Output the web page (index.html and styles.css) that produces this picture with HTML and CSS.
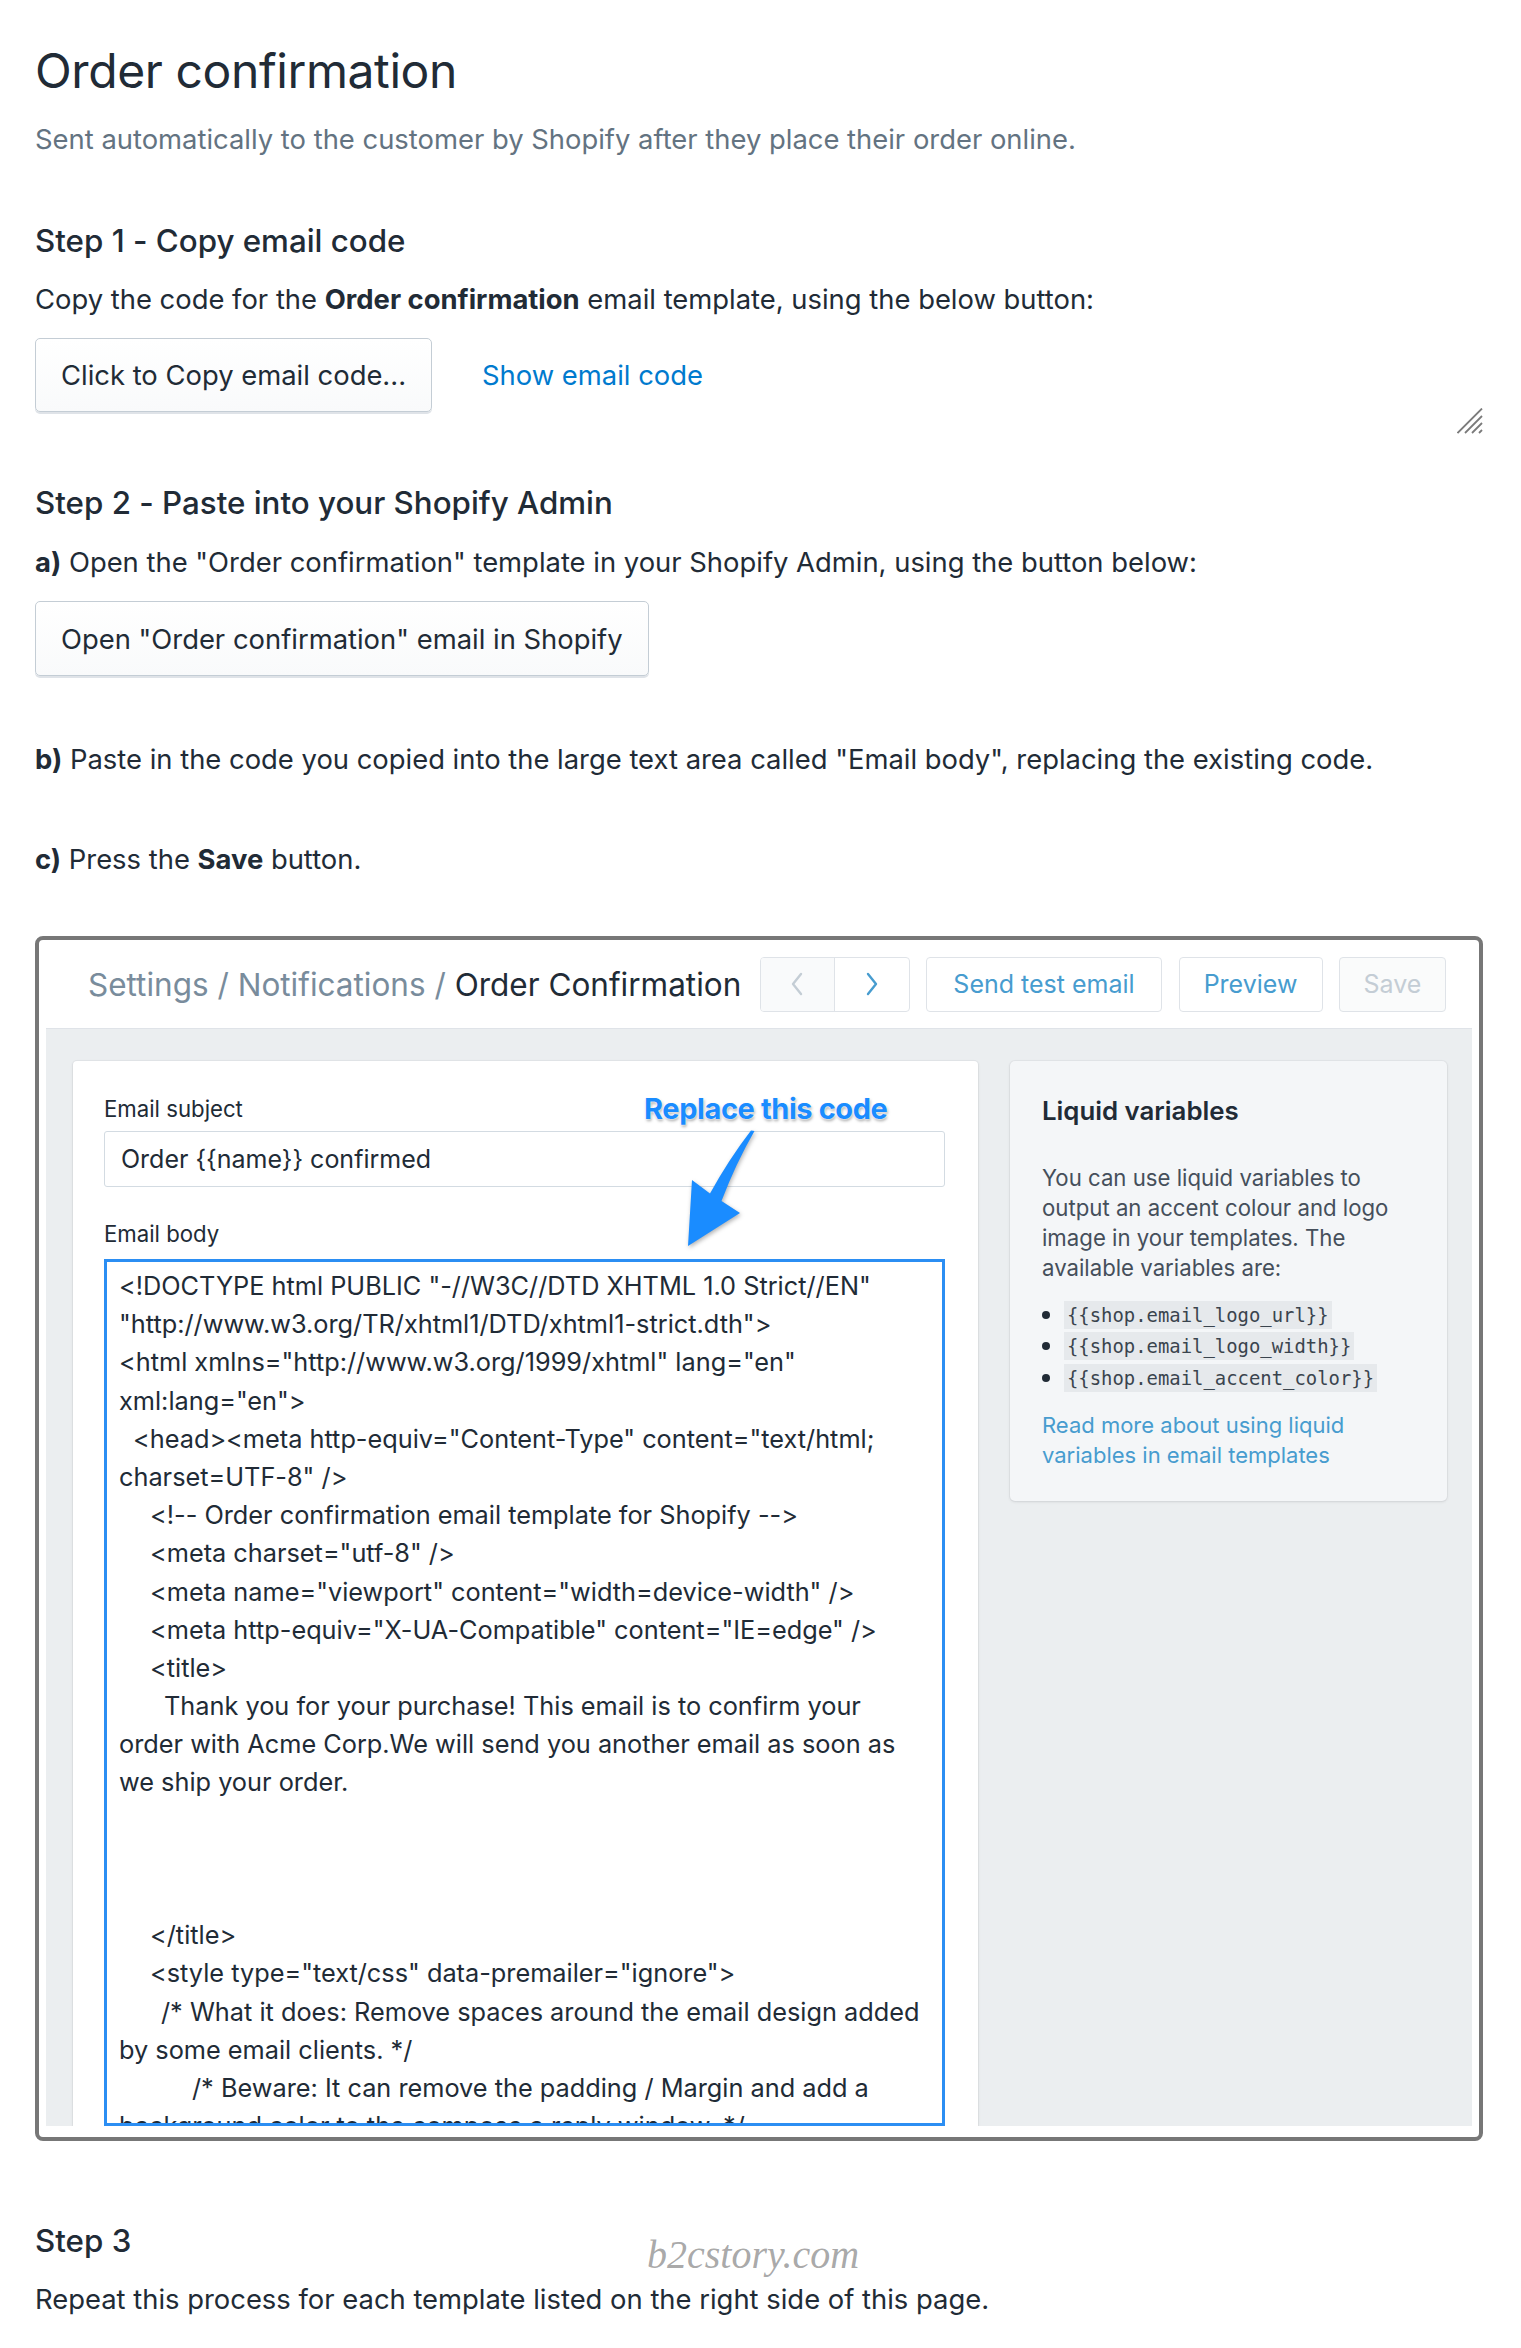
FILE: index.html
```html
<!DOCTYPE html>
<html lang="en">
<head>
<meta charset="utf-8">
<title>Order confirmation</title>
<link rel="stylesheet" href="styles.css">
</head>
<body>
<main class="page">
  <h1 class="title">Order confirmation</h1>
  <p class="subtitle">Sent automatically to the customer by Shopify after they place their order online.</p>

  <h2 class="step-title step-1">Step 1 - Copy email code</h2>
  <p class="text">Copy the code for the <strong>Order confirmation</strong> email template, using the below button:</p>
  <div class="actions">
    <button class="btn" type="button">Click to Copy email code...</button>
    <a class="link" href="#">Show email code</a>
  </div>
  <div class="grip-row">
    <svg class="grip" width="26" height="26" viewBox="0 0 26 26">
      <line x1="0.5" y1="25" x2="25" y2="0.5"/>
      <line x1="8" y1="25" x2="25" y2="8"/>
      <line x1="15" y1="25" x2="25" y2="15"/>
      <line x1="22" y1="25" x2="25" y2="22"/>
    </svg>
  </div>

  <h2 class="step-title step-2">Step 2 - Paste into your Shopify Admin</h2>
  <p class="text text-a"><strong>a)</strong> Open the "Order confirmation" template in your Shopify Admin, using the button below:</p>
  <button class="btn btn-open" type="button">Open "Order confirmation" email in Shopify</button>
  <p class="text text-b"><strong>b)</strong> Paste in the code you copied into the large text area called "Email body", replacing the existing code.</p>
  <p class="text text-c"><strong>c)</strong> Press the <strong>Save</strong> button.</p>

  <figure class="frame">
    <div class="shot-header">
      <div class="crumbs"><span>Settings / Notifications / </span><span class="crumb-current">Order Confirmation</span></div>
      <div class="shot-actions">
        <div class="pager">
          <span class="pager-btn pager-prev">
            <svg width="14" height="24" viewBox="0 0 14 24"><polyline points="11,2 3,12 11,22"/></svg>
          </span>
          <span class="pager-btn pager-next">
            <svg width="14" height="24" viewBox="0 0 14 24"><polyline points="3,2 11,12 3,22"/></svg>
          </span>
        </div>
        <span class="hbtn hbtn-send">Send test email</span>
        <span class="hbtn hbtn-preview">Preview</span>
        <span class="hbtn hbtn-save">Save</span>
      </div>
    </div>
    <div class="shot-body">
      <div class="card-left">
        <div class="field-label">Email subject</div>
        <div class="input">Order {{name}} confirmed</div>
        <div class="field-label label-body">Email body</div>
        <div class="code">
          <div class="ln">&lt;!DOCTYPE html PUBLIC "-//W3C//DTD XHTML 1.0 Strict//EN"</div>
          <div class="ln">"http://www.w3.org/TR/xhtml1/DTD/xhtml1-strict.dth"&gt;</div>
          <div class="ln">&lt;html xmlns="http://www.w3.org/1999/xhtml" lang="en"</div>
          <div class="ln">xml:lang="en"&gt;</div>
          <div class="ln i1">&lt;head&gt;&lt;meta http-equiv="Content-Type" content="text/html;</div>
          <div class="ln">charset=UTF-8" /&gt;</div>
          <div class="ln i2">&lt;!-- Order confirmation email template for Shopify --&gt;</div>
          <div class="ln i2">&lt;meta charset="utf-8" /&gt;</div>
          <div class="ln i2">&lt;meta name="viewport" content="width=device-width" /&gt;</div>
          <div class="ln i2">&lt;meta http-equiv="X-UA-Compatible" content="IE=edge" /&gt;</div>
          <div class="ln i2">&lt;title&gt;</div>
          <div class="ln i3">Thank you for your purchase! This email is to confirm your</div>
          <div class="ln">order with Acme Corp.We will send you another email as soon as</div>
          <div class="ln">we ship your order.</div>
          <div class="ln"></div>
          <div class="ln"></div>
          <div class="ln"></div>
          <div class="ln i2">&lt;/title&gt;</div>
          <div class="ln i2">&lt;style type="text/css" data-premailer="ignore"&gt;</div>
          <div class="ln i4">/* What it does: Remove spaces around the email design added</div>
          <div class="ln">by some email clients. */</div>
          <div class="ln i5">/* Beware: It can remove the padding / Margin and add a</div>
          <div class="ln">background color to the compose a reply window. */</div>
        </div>
        <div class="note">Replace this code</div>
        <svg class="arrow" width="100" height="140" viewBox="0 0 100 140">
          <path d="M81.5 10 Q63 42 48.5 80 L67 92 L15 125 L19 59 L37 72.5 Q56 38 78 9.5 Z"/>
        </svg>
      </div>
      <div class="card-right">
        <h3 class="lv-title">Liquid variables</h3>
        <p class="lv-text">You can use liquid variables to<br>output an accent colour and logo<br>image in your templates. The<br>available variables are:</p>
        <ul class="lv-list">
          <li><code>{{shop.email_logo_url}}</code></li>
          <li><code>{{shop.email_logo_width}}</code></li>
          <li><code>{{shop.email_accent_color}}</code></li>
        </ul>
        <a class="lv-link" href="#">Read more about using liquid<br>variables in email templates</a>
      </div>
    </div>
  </figure>

  <h2 class="step-title step-3">Step 3</h2>
  <p class="text">Repeat this process for each template listed on the right side of this page.</p>
  <div class="watermark">b2cstory.com</div>
</main>
</body>
</html>
```

FILE: styles.css
```css
* { box-sizing: border-box; }

body {
  margin: 0;
  background: #fff;
  font-family: Inter, "Noto Sans", "Liberation Sans", sans-serif;
  color: #212b36;
  font-feature-settings: "calt" 0;
}

.page {
  position: relative;
  width: 1521px;
  min-height: 2348px;
  padding: 41px 38px 0 35px;
}

.title {
  margin: 0;
  font-size: 48px;
  line-height: 60px;
  font-weight: 400;
  letter-spacing: -0.4px;
}

.subtitle {
  margin: 20px 0 0;
  font-size: 27.4px;
  line-height: 36px;
  color: #637381;
}

.step-title {
  margin: 0;
  font-size: 31.3px;
  line-height: 40px;
  font-weight: 500;
}
.step-1 { margin-top: 64px; }
.step-2 { margin-top: 51px; }
.step-3 { margin-top: 80px; }

.text {
  margin: 20px 0 0;
  font-size: 27.4px;
  line-height: 36px;
}
.text strong { font-weight: 700; }
.text-a { margin-top: 21px; }
.text-b { margin-top: 65px; }
.text-c { margin-top: 64px; }

.actions {
  display: flex;
  align-items: center;
  gap: 50px;
  margin-top: 21px;
}

.btn {
  display: flex;
  align-items: center;
  height: 74px;
  padding: 0 25px;
  font-family: inherit;
  font-size: 27.4px;
  color: #212b36;
  background: linear-gradient(#ffffff, #f9fafb);
  border: 1.5px solid #c4cdd5;
  border-radius: 5px;
  box-shadow: 0 2px 0 #dfe3e8;
}
.btn-open {
  margin-top: 21px;
  height: 75px;
}

.link {
  font-size: 27.4px;
  color: #007ace;
  text-decoration: none;
}

.grip-row {
  display: flex;
  justify-content: flex-end;
  height: 24px;
  margin-top: -4px;
}
.grip line {
  stroke: #7a7a7a;
  stroke-width: 1.8;
}

/* screenshot frame */
.frame {
  margin: 59px 0 0;
  border: 4px solid #777;
  border-radius: 8px;
  padding: 0 7px 11px;
  background: #fff;
  overflow: hidden;
}

.shot-header {
  height: 89px;
  display: flex;
  align-items: center;
  padding: 0 26px 0 42px;
  border-bottom: 1px solid #dfe3e8;
}
.crumbs {
  font-size: 31.5px;
  color: #798c9c;
  white-space: nowrap;
}
.crumb-current { color: #212b36; }

.shot-actions {
  margin-left: auto;
  display: flex;
  align-items: center;
  gap: 16.5px;
}
.pager {
  display: flex;
  height: 55px;
  border: 1.5px solid #dfe3e8;
  border-radius: 4px;
  overflow: hidden;
}
.pager-btn {
  width: 74px;
  display: flex;
  align-items: center;
  justify-content: center;
}
.pager-btn polyline {
  fill: none;
  stroke-width: 2.4;
  stroke-linecap: round;
  stroke-linejoin: round;
}
.pager-prev {
  background: #f9fafb;
  border-right: 1.5px solid #dfe3e8;
}
.pager-prev polyline { stroke: #c4cdd5; }
.pager-next polyline { stroke: #479ccf; }

.hbtn {
  height: 55px;
  display: flex;
  align-items: center;
  justify-content: center;
  border: 1.5px solid #dfe3e8;
  border-radius: 4px;
  font-size: 25px;
  color: #479ccf;
  background: #fff;
}
.hbtn-send { width: 236px; }
.hbtn-preview { width: 144px; }
.hbtn-save {
  width: 107px;
  color: #c4cdd5;
  background: #fafbfb;
}

.shot-body {
  height: 1097px;
  display: flex;
  align-items: flex-start;
  gap: 32px;
  padding: 32px 25px 0 27px;
  background: #ebeef0;
  overflow: hidden;
}

.card-left {
  position: relative;
  flex: none;
  width: 905px;
  padding: 34px 33px 0 31px;
  background: #fff;
  border-radius: 4px 4px 0 0;
  box-shadow: 0 0 0 1px rgba(63, 63, 68, 0.04), 0 1px 3px rgba(63, 63, 68, 0.12);
}
.field-label {
  font-size: 22.2px;
  line-height: 28px;
  color: #212b36;
}
.label-body { margin-top: 33px; }
.input {
  margin-top: 8px;
  height: 56px;
  display: flex;
  align-items: center;
  padding: 0 16px;
  border: 1.5px solid #d3dbe2;
  border-radius: 3px;
  font-size: 25px;
  color: #212b36;
}
.code {
  margin-top: 11px;
  height: 867px;
  padding: 5px 12px 0;
  border: 3px solid #2b8ef3;
  font-size: 25.3px;
  line-height: 38.2px;
  color: #212b36;
  overflow: hidden;
}
.ln {
  height: 38.2px;
  white-space: pre;
}
.i1 { padding-left: 14px; }
.i2 { padding-left: 31px; }
.i3 { padding-left: 45px; }
.i4 { padding-left: 42px; }
.i5 { padding-left: 73px; }

.note {
  position: absolute;
  left: 571px;
  top: 32px;
  font-size: 29px;
  line-height: 32px;
  font-weight: 700;
  letter-spacing: -0.4px;
  color: #1a8cff;
  text-shadow: 0 0 2px #fff, 0 0 2px #fff, 1px 2px 3px rgba(0, 0, 0, 0.35);
}
.arrow {
  position: absolute;
  left: 600px;
  top: 60px;
  overflow: visible;
}
.arrow path {
  fill: #1a8cff;
  filter: drop-shadow(1px 2px 2px rgba(0, 0, 0, 0.3));
}

.card-right {
  flex: none;
  width: 437px;
  padding: 34px 16px 31px 32px;
  background: #f4f6f8;
  border-radius: 5px;
  box-shadow: 0 0 0 1px rgba(63, 63, 68, 0.04), 0 1px 3px rgba(63, 63, 68, 0.12);
}
.lv-title {
  margin: 0;
  font-size: 25.8px;
  line-height: 32px;
  font-weight: 600;
  color: #212b36;
}
.lv-text {
  margin: 36px 0 0;
  font-size: 22.2px;
  line-height: 30px;
  color: #454f5b;
}
.lv-list {
  margin: 16px 0 0;
  padding: 0;
  list-style: none;
}
.lv-list li {
  display: flex;
  align-items: center;
  gap: 14px;
  height: 31.5px;
}
.lv-list li::before {
  content: "";
  flex: none;
  width: 8px;
  height: 8px;
  border-radius: 50%;
  background: #212b36;
}
.lv-list code {
  font-family: "DejaVu Sans Mono", "Liberation Mono", monospace;
  font-size: 18.9px;
  line-height: 28px;
  padding: 0 3px;
  background: #e6e9ec;
  color: #3a444e;
}
.lv-link {
  display: block;
  margin-top: 16px;
  font-size: 22px;
  line-height: 30px;
  color: #479ccf;
  text-decoration: none;
}

.watermark {
  position: absolute;
  left: 647px;
  top: 2233px;
  font-family: "Liberation Serif", serif;
  font-style: italic;
  font-size: 40px;
  line-height: 44px;
  color: rgba(120, 120, 120, 0.65);
}
```
